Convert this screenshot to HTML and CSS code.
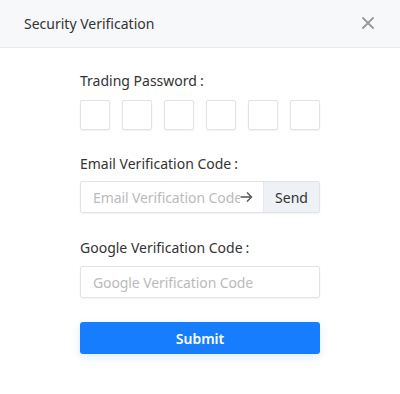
FILE: index.html
```html
<!DOCTYPE html>
<html lang="en">
<head>
    <meta charset="UTF-8">
    <meta name="viewport" content="width=device-width, initial-scale=1.0">
    <title>Security Verification</title>
    <link rel="stylesheet" href="styles.css">
</head>
<body>
    <div class="modal">
        <div class="modal-header">
            <span class="modal-title">Security Verification</span>
            <span class="modal-close">
                <svg width="12" height="12" viewBox="0 0 12 12">
                    <path d="M1 1 L11 11 M11 1 L1 11" stroke="#8a8a8a" stroke-width="1.8" stroke-linecap="round"/>
                </svg>
            </span>
        </div>

        <form class="modal-body">
            <div class="field field-password">
                <label class="field-label">Trading Password<span class="colon">:</span></label>
                <div class="pin-boxes">
                    <input type="password" class="pin-box" maxlength="1">
                    <input type="password" class="pin-box" maxlength="1">
                    <input type="password" class="pin-box" maxlength="1">
                    <input type="password" class="pin-box" maxlength="1">
                    <input type="password" class="pin-box" maxlength="1">
                    <input type="password" class="pin-box" maxlength="1">
                </div>
            </div>

            <div class="field field-email">
                <label class="field-label">Email Verification Code<span class="colon">:</span></label>
                <div class="input-group">
                    <input type="text" class="text-input" placeholder="Email Verification Code">
                    <span class="input-arrow">
                        <svg width="13" height="12" viewBox="0 0 13 12">
                            <path d="M0.5 6 H11.5 M7 1.5 L11.5 6 L7 10.5" stroke="#555" stroke-width="1.4" fill="none"/>
                        </svg>
                    </span>
                    <button type="button" class="send-button">Send</button>
                </div>
            </div>

            <div class="field field-google">
                <label class="field-label">Google Verification Code<span class="colon">:</span></label>
                <div class="input-group">
                    <input type="text" class="text-input" placeholder="Google Verification Code">
                </div>
            </div>

            <button type="submit" class="submit-button">Submit</button>
        </form>
    </div>
</body>
</html>
```

FILE: styles.css
```css
* {
    margin: 0;
    padding: 0;
    box-sizing: border-box;
}

body {
    font-family: "Noto Sans", "Open Sans", sans-serif;
    background: #fff;
    color: #333;
    width: 400px;
    height: 394px;
    overflow: hidden;
}

.modal {
    background: #fff;
    height: 394px;
}

.modal-header {
    height: 48px;
    display: flex;
    align-items: center;
    justify-content: space-between;
    padding: 0 26px 1px 24px;
    background: #f7f8fa;
    border-bottom: 1px solid #e6ebf1;
}

.modal-title {
    font-size: 14px;
    color: #333;
}

.modal-close {
    display: flex;
    cursor: pointer;
    opacity: 0.85;
}

.modal-body {
    padding: 0 80px;
}

.field-label {
    display: block;
    font-size: 14px;
    line-height: 20px;
    color: #333;
}

.colon {
    margin-left: 3px;
}

.field-password {
    padding-top: 23px;
}

.field-password .field-label {
    margin-bottom: 9px;
}

.pin-boxes {
    display: flex;
    justify-content: space-between;
}

.pin-box {
    width: 30px;
    height: 30px;
    border: 1px solid #e3e3e3;
    border-radius: 2px;
    box-shadow: 0 1px 2px rgba(0, 0, 0, 0.06);
    outline: none;
    text-align: center;
}

.field-email {
    margin-top: 24px;
}

.field-email .field-label {
    margin-bottom: 7px;
}

.field-google {
    margin-top: 25px;
}

.field-google .field-label {
    margin-bottom: 8px;
}

.input-group {
    display: flex;
    align-items: stretch;
    height: 32px;
    border: 1px solid #e3e3e3;
    border-radius: 2px;
    box-shadow: 0 1px 2px rgba(0, 0, 0, 0.05);
    overflow: hidden;
}

.text-input {
    flex: 1;
    min-width: 0;
    border: none;
    outline: none;
    padding: 0 0 0 12px;
    font-family: inherit;
    font-size: 14px;
    letter-spacing: -0.1px;
    color: #333;
    background: transparent;
}

.text-input::placeholder {
    color: #bbb;
}

.input-arrow {
    display: flex;
    align-items: center;
    padding: 0 10px 0 0;
}

.send-button {
    width: 56px;
    flex-shrink: 0;
    border: none;
    border-left: 1px solid #e6e9ee;
    background: #eef1f5;
    font-family: inherit;
    font-size: 14px;
    color: #333;
    cursor: pointer;
}

.submit-button {
    display: block;
    width: 100%;
    height: 32px;
    margin-top: 24px;
    border: none;
    border-radius: 3px;
    background: #177dff;
    color: #fff;
    font-family: inherit;
    font-size: 14px;
    font-weight: 600;
    box-shadow: 0 3px 8px rgba(23, 125, 255, 0.15);
    cursor: pointer;
}
```
